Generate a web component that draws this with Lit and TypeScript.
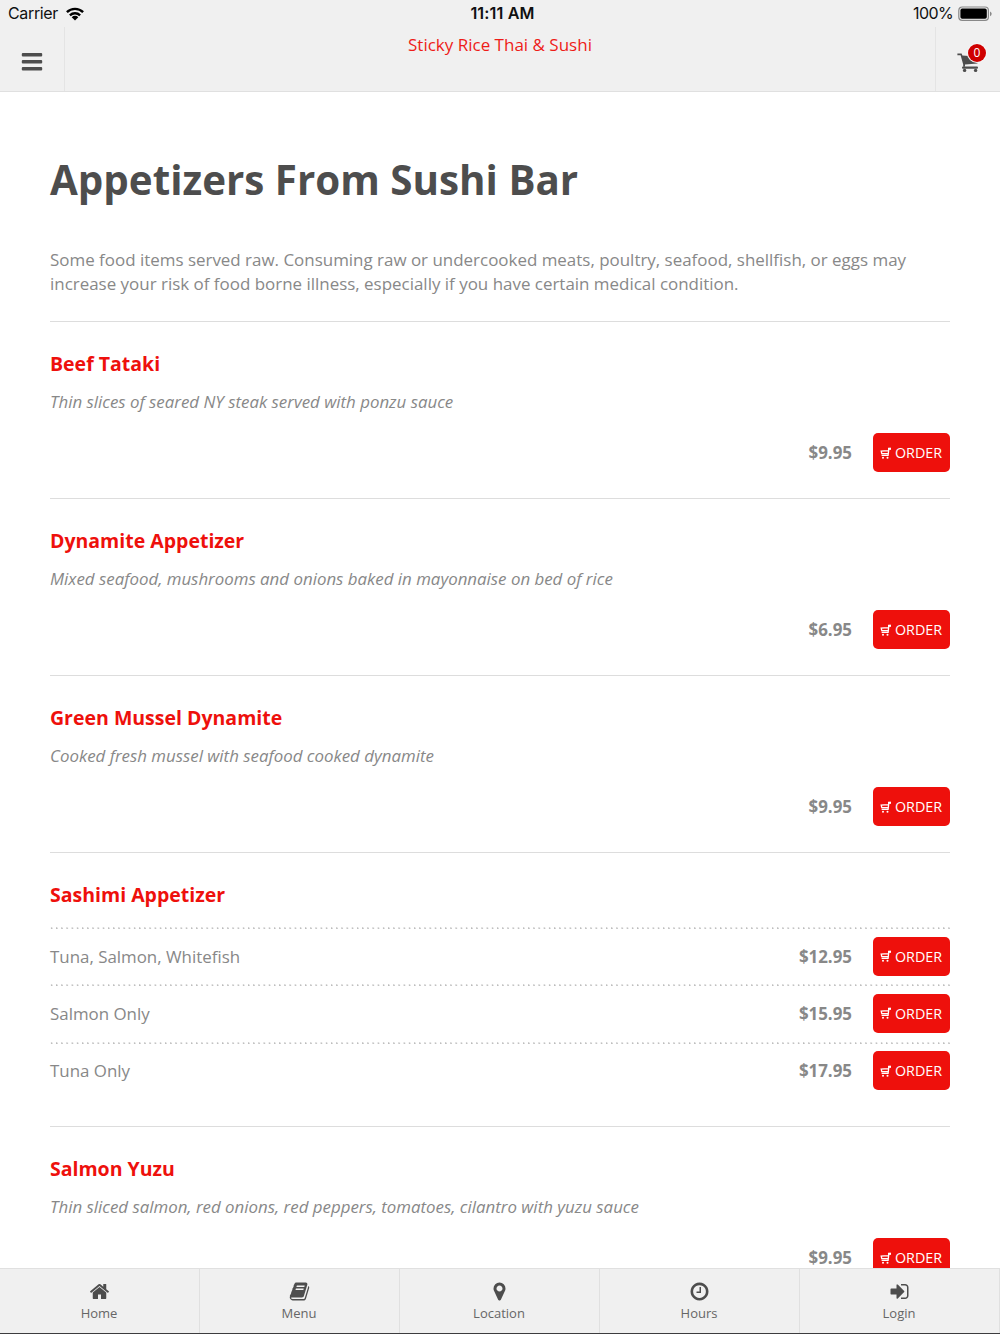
import { LitElement, html, css, svg } from "lit";
import { customElement, property } from "lit/decorators.js";

const glyphs: Record<string, string> = {
  home: "M1472 992v480q0 26-19 45t-45 19h-384v-384h-256v384h-384q-26 0-45-19t-19-45v-480q0-1 .5-3t.5-3l575-474 575 474q1 2 1 6zm223-69l-62 74q-8 9-21 11h-3q-13 0-21-7l-692-577-692 577q-12 8-24 7-13-2-21-11l-62-74q-8-10-7-23.5t11-21.5l719-599q32-26 76-26t76 26l244 204v-195q0-14 9-23t23-9h192q14 0 23 9t9 23v408l219 182q10 8 11 21.5t-7 23.5z",
  book: "M1703 478q40 57 18 129l-275 906q-19 64-76.5 107.5t-122.5 43.5h-923q-77 0-148.5-53.5t-99.5-131.5q-24-67-2-127 0-4 3-27t4-37q1-8-3-21.5t-3-19.5q2-11 8-21t16.5-23.5 16.5-23.5q23-38 45-91.5t30-91.5q3-10 .5-30t-.5-28q3-11 17-28t17-23q21-36 42-92t25-90q1-9-2.5-32t.5-28q4-13 22-30.5t22-22.5q19-26 42.5-84.5t27.5-96.5q1-8-3-25.5t-2-26.5q2-8 9-18t18-23 17-21q8-12 16.5-30.5t15-35 16-36 19.5-32 26.5-23.5 36-11.5 47.5 5.5l-1 3q38-9 51-9h761q74 0 114 56t18 130l-274 906q-36 119-71.5 153.5t-128.5 34.5h-869q-27 0-38 15-11 16-1 43 24 70 144 70h923q29 0 56-15.5t35-41.5l300-987q7-22 5-57 38 15 59 43zm-1064 2q-4 13 2 22.5t20 9.5h608q13 0 25.5-9.5t16.5-22.5l21-64q4-13-2-22.5t-20-9.5h-608q-13 0-25.5 9.5t-16.5 22.5zm-83 256q-4 13 2 22.5t20 9.5h608q13 0 25.5-9.5t16.5-22.5l21-64q4-13-2-22.5t-20-9.5h-608q-13 0-25.5 9.5t-16.5 22.5z",
  marker: "M1152 640q0-106-75-181t-181-75-181 75-75 181 75 181 181 75 181-75 75-181zm256 0q0 109-33 179l-364 774q-16 33-47.5 52t-67.5 19-67.5-19-46.5-52l-365-774q-33-70-33-179 0-212 150-362t362-150 362 150 150 362z",
  clock: "M1024 544v448q0 14-9 23t-23 9h-320q-14 0-23-9t-9-23v-64q0-14 9-23t23-9h224v-352q0-14 9-23t23-9h64q14 0 23 9t9 23zm416 352q0-148-73-273t-198-198-273-73-273 73-198 198-73 273 73 273 198 198 273 73 273-73 198-198 73-273zm224 0q0 209-103 385.5t-279.5 279.5-385.5 103-385.5-103-279.5-279.5-103-385.5 103-385.5 279.5-279.5 385.5-103 385.5 103 279.5 279.5 103 385.5z",
  login: "M1312 896q0 26-19 45l-544 544q-19 19-45 19t-45-19-19-45v-288h-448q-26 0-45-19t-19-45v-384q0-26 19-45t45-19h448v-288q0-26 19-45t45-19 45 19l544 544q19 19 19 45zm352-352v704q0 119-84.5 203.5t-203.5 84.5h-320q-13 0-22.5-9.5t-9.5-22.5q0-4-1-20t-.5-26.5 3-23.5 10-19.5 20.5-6.5h320q66 0 113-47t47-113v-704q0-66-47-113t-113-47h-312l-11.5-1-11.5-3-8-5.5-7-9-2-13.5q0-4-1-20t-.5-26.5 3-23.5 10-19.5 20.5-6.5h320q119 0 203.5 84.5t84.5 203.5z",
};

interface Choice { name: string; price: string }
interface Dish { name: string; desc?: string; price?: string; choices?: Choice[] }

const dishes: Dish[] = [
  { name: "Beef Tataki", desc: "Thin slices of seared NY steak served with ponzu sauce", price: "$9.95" },
  { name: "Dynamite Appetizer", desc: "Mixed seafood, mushrooms and onions baked in mayonnaise on bed of rice", price: "$6.95" },
  { name: "Green Mussel Dynamite", desc: "Cooked fresh mussel with seafood cooked dynamite", price: "$9.95" },
  {
    name: "Sashimi Appetizer",
    choices: [
      { name: "Tuna, Salmon, Whitefish", price: "$12.95" },
      { name: "Salmon Only", price: "$15.95" },
      { name: "Tuna Only", price: "$17.95" },
    ],
  },
  { name: "Salmon Yuzu", desc: "Thin sliced salmon, red onions, red peppers, tomatoes, cilantro with yuzu sauce", price: "$9.95" },
];

@customElement("status-bar")
class StatusBar extends LitElement {
  static styles = css`
    :host { display: grid; grid-template-columns: 1fr auto 1fr; align-items: center; height: 27px; padding: 0 8px; font: 16px/27px Inter, sans-serif; color: #111; background: #f0f0f0; box-sizing: border-box; }
    .left { display: flex; align-items: center; gap: 8px; }
    .time { font-weight: 600; font-size: 16.2px; padding-left: 5px; letter-spacing: 0.1px; }
    .right { display: flex; align-items: center; justify-content: flex-end; gap: 5px; }
    .carrier { letter-spacing: -0.35px; }
    .pct { letter-spacing: -0.6px; }
    svg { display: block; }
  `;
  render() {
    return html`
      <div class="left">
        <span class="carrier">Carrier</span>
        <svg width="18" height="14" viewBox="0 0 18 14">
          <path d="M.9 5.2A11.6 11.6 0 0 1 17.1 5.2M3.9 8.3A7.4 7.4 0 0 1 14.1 8.3" fill="none" stroke="#000" stroke-width="2.4"/>
          <path d="M9 13.5L5.7 10.2A4.7 4.7 0 0 1 12.3 10.2Z" fill="#000"/>
        </svg>
      </div>
      <div class="time">11:11 AM</div>
      <div class="right">
        <span class="pct">100%</span>
        <svg width="34" height="16" viewBox="0 0 34 16">
          <rect x=".8" y="1" width="29.6" height="13.4" rx="3.4" fill="none" stroke="#888" stroke-width="1.2"/>
          <rect x="2.4" y="2.6" width="26.4" height="10.2" rx="1.8" fill="#000"/>
          <path d="M32 5.4q1.7.8 1.7 2.4t-1.7 2.4z" fill="#888"/>
        </svg>
      </div>`;
  }
}

@customElement("top-bar")
class TopBar extends LitElement {
  static styles = css`
    :host { display: flex; height: 65px; box-sizing: border-box; background: #f0f0f0; border-bottom: 1px solid #e0e0e0; }
    .side { width: 65px; box-sizing: border-box; display: flex; align-items: center; justify-content: center; position: relative; padding-top: 5px; }
    .menu { border-right: 1px solid #e4e4e4; padding-right: 1px; }
    .cart { border-left: 1px solid #e4e4e4; }
    .title { flex: 1; text-align: center; font: 17px/36px "Open Sans", sans-serif; color: #ee1c18; }
    .badge { position: absolute; left: 32px; top: 17px; width: 18px; height: 18px; border-radius: 50%; background: #cf0000; box-shadow: 0 0 0 1px #f6f6f6; color: #fff; font: 12px/18px "Open Sans", sans-serif; text-align: center; }
    svg { display: block; }
  `;
  render() {
    return html`
      <div class="side menu">
        <svg width="22" height="20" viewBox="0 0 22 20" fill="#4d4d4d">
          <rect x=".8" y="1" width="20.4" height="3.6" rx="1"/>
          <rect x=".8" y="8" width="20.4" height="3.6" rx="1"/>
          <rect x=".8" y="14.9" width="20.4" height="3.6" rx="1"/>
        </svg>
      </div>
      <div class="title">Sticky Rice Thai &amp; Sushi</div>
      <div class="side cart">
        <svg width="22" height="22" viewBox="0 0 22 22" fill="#4d4d4d">
          <path d="M.4 2.6H4.6L5.4 4.4 21.6 5.8 20.4 12.6 8 13.6V15.8H6.2V13.4L3.6 4.2H.4Z"/>
          <rect x="5" y="15.6" width="16" height="2.2" rx="1"/>
          <circle cx="7.6" cy="19.4" r="1.7"/><circle cx="18.6" cy="19.4" r="1.7"/>
        </svg>
        <span class="badge">0</span>
      </div>`;
  }
}

@customElement("order-line")
class OrderLine extends LitElement {
  @property() price = "";
  static styles = css`
    :host { display: flex; align-items: center; justify-content: flex-end; gap: 21px; }
    .price { font: 700 16.9px/39px "Open Sans", sans-serif; color: #888; }
    .order { display: flex; align-items: center; gap: 4px; width: 77px; height: 39px; padding: 0 0 0 7px; border: 0; border-radius: 5px; background: #ee100c; color: #fff; font: 14.3px/39px "Open Sans", sans-serif; }
    svg { display: block; }
  `;
  render() {
    return html`
      <span class="price">${this.price}</span>
      <button class="order">
        <svg width="11" height="12" viewBox="0 0 11 12">
          <path d="M11 1.5H8.9L8.1 8.4H1.6M8.4 3.6L1.2 4.1 1.8 6.7H8.2" fill="none" stroke="#fff" stroke-width="1.3"/>
          <path d="M8 .9h3v1.9H8z" fill="#fff"/>
          <circle cx="3" cy="10.7" r="1" fill="#fff"/><circle cx="7.5" cy="10.7" r="1" fill="#fff"/>
        </svg>
        <span>ORDER</span>
      </button>`;
  }
}

@customElement("tab-bar")
class TabBar extends LitElement {
  static styles = css`
    :host { display: grid; grid-template-columns: repeat(5, 1fr); height: 66px; box-sizing: border-box; background: #f0f0f0; border-top: 1px solid #e0e0e0; border-bottom: 1px solid #3c3c3e; }
    .tab { display: flex; flex-direction: column; align-items: center; padding: 12px 1px 0 0; border-right: 1px solid #e0e0e0; font: 13px/18px "Open Sans", sans-serif; color: #666; }
    .glyph { display: block; width: 21px; height: 21px; fill: #4d4d4d; margin-bottom: 2px; }
  `;
  render() {
    const tabs = [["home", "Home"], ["book", "Menu"], ["marker", "Location"], ["clock", "Hours"], ["login", "Login"]];
    return tabs.map(([icon, label]) => html`
      <div class="tab">
        <svg class="glyph" viewBox="0 0 1792 1792">${svg`<path d=${glyphs[icon]} />`}</svg>
        <span>${label}</span>
      </div>`);
  }
}

@customElement("app-root")
class AppRoot extends LitElement {
  static styles = css`
    :host { display: flex; flex-direction: column; height: 1334px; overflow: hidden; background: #fff; font-family: "Open Sans", sans-serif; color: #888; }
    status-bar, top-bar, tab-bar { flex: none; }
    .page { flex: 1; min-height: 0; overflow: hidden; padding: 60px 50px 0; }
    .heading { margin: 0; font-size: 40.35px; line-height: 55px; font-weight: 700; color: #4d4d4d; white-space: nowrap; }
    .notice { margin: 41px 0 25.6px; font-size: 16.94px; line-height: 23.7px; }
    .dish { border-top: 1px solid #ddd; box-sizing: border-box; height: 177px; padding-top: 28px; }
    .dish.multi { height: 274px; }
    .name { margin: 0; font-size: 19.5px; line-height: 28px; font-weight: 700; color: #ee100c; }
    .desc { margin: 11px 0 18px; font-size: 16.87px; line-height: 26px; font-style: italic; white-space: nowrap; }
    .choices { margin-top: 18px; }
    .choice { display: flex; align-items: center; justify-content: space-between; box-sizing: border-box; height: 57.3px; padding-top: 1px; font-size: 16.9px; background: radial-gradient(circle at 1.5px 1.2px, #bbb 0.6px, transparent 1.1px) 0 0 / 5.2px 3px repeat-x; }
  `;
  render() {
    return html`
      <status-bar></status-bar>
      <top-bar></top-bar>
      <main class="page">
        <h1 class="heading">Appetizers From Sushi Bar</h1>
        <p class="notice">Some food items served raw. Consuming raw or undercooked meats, poultry, seafood, shellfish, or eggs may increase your risk of food borne illness, especially if you have certain medical condition.</p>
        ${dishes.map((d) => html`
          <section class="dish ${d.choices ? "multi" : ""}">
            <h2 class="name">${d.name}</h2>
            ${d.choices
              ? html`<div class="choices">${d.choices.map((c) => html`
                  <div class="choice"><span>${c.name}</span><order-line .price=${c.price}></order-line></div>`)}</div>`
              : html`<p class="desc">${d.desc}</p><order-line .price=${d.price ?? ""}></order-line>`}
          </section>`)}
      </main>
      <tab-bar></tab-bar>`;
  }
}
